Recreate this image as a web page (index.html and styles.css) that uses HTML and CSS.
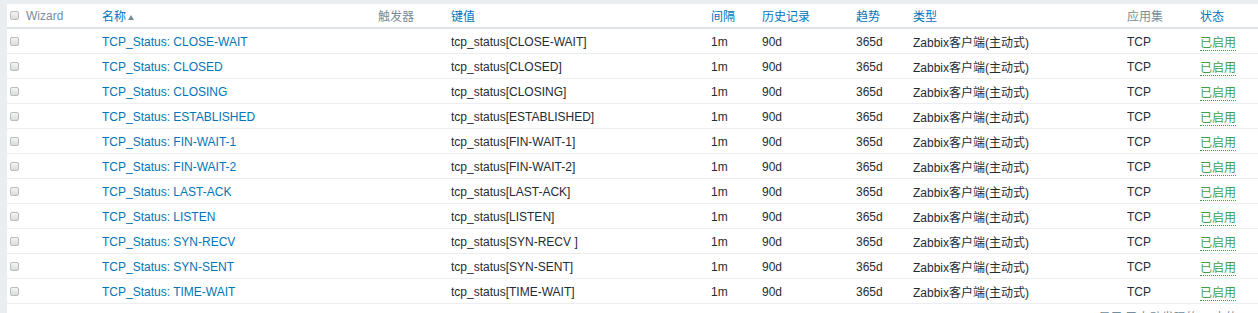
FILE: index.html
```html
<!DOCTYPE html>
<html lang="zh">
<head>
<meta charset="utf-8">
<title>监控项</title>
<link rel="stylesheet" href="styles.css">
</head>
<body>
<div class="panel">
<table class="list">
<colgroup>
<col class="c-cb"><col class="c-wiz"><col class="c-name"><col class="c-trig"><col class="c-key"><col class="c-int"><col class="c-hist"><col class="c-trend"><col class="c-type"><col class="c-app"><col class="c-status">
</colgroup>
<thead>
<tr>
<th class="cb-cell"><span class="cb"></span></th>
<th class="muted">Wizard</th>
<th><a class="link sorted">名称</a></th>
<th class="muted">触发器</th>
<th><a class="link">键值</a></th>
<th><a class="link">间隔</a></th>
<th><a class="link">历史记录</a></th>
<th><a class="link">趋势</a></th>
<th><a class="link">类型</a></th>
<th class="muted">应用集</th>
<th><a class="link">状态</a></th>
</tr>
</thead>
<tbody>
<tr><td class="cb-cell"><span class="cb"></span></td><td></td><td><a class="link">TCP_Status: CLOSE-WAIT</a></td><td></td><td>tcp_status[CLOSE-WAIT]</td><td>1m</td><td>90d</td><td>365d</td><td>Zabbix客户端(主动式)</td><td>TCP</td><td><a class="enabled">已启用</a></td></tr>
<tr><td class="cb-cell"><span class="cb"></span></td><td></td><td><a class="link">TCP_Status: CLOSED</a></td><td></td><td>tcp_status[CLOSED]</td><td>1m</td><td>90d</td><td>365d</td><td>Zabbix客户端(主动式)</td><td>TCP</td><td><a class="enabled">已启用</a></td></tr>
<tr><td class="cb-cell"><span class="cb"></span></td><td></td><td><a class="link">TCP_Status: CLOSING</a></td><td></td><td>tcp_status[CLOSING]</td><td>1m</td><td>90d</td><td>365d</td><td>Zabbix客户端(主动式)</td><td>TCP</td><td><a class="enabled">已启用</a></td></tr>
<tr><td class="cb-cell"><span class="cb"></span></td><td></td><td><a class="link">TCP_Status: ESTABLISHED</a></td><td></td><td>tcp_status[ESTABLISHED]</td><td>1m</td><td>90d</td><td>365d</td><td>Zabbix客户端(主动式)</td><td>TCP</td><td><a class="enabled">已启用</a></td></tr>
<tr><td class="cb-cell"><span class="cb"></span></td><td></td><td><a class="link">TCP_Status: FIN-WAIT-1</a></td><td></td><td>tcp_status[FIN-WAIT-1]</td><td>1m</td><td>90d</td><td>365d</td><td>Zabbix客户端(主动式)</td><td>TCP</td><td><a class="enabled">已启用</a></td></tr>
<tr><td class="cb-cell"><span class="cb"></span></td><td></td><td><a class="link">TCP_Status: FIN-WAIT-2</a></td><td></td><td>tcp_status[FIN-WAIT-2]</td><td>1m</td><td>90d</td><td>365d</td><td>Zabbix客户端(主动式)</td><td>TCP</td><td><a class="enabled">已启用</a></td></tr>
<tr><td class="cb-cell"><span class="cb"></span></td><td></td><td><a class="link">TCP_Status: LAST-ACK</a></td><td></td><td>tcp_status[LAST-ACK]</td><td>1m</td><td>90d</td><td>365d</td><td>Zabbix客户端(主动式)</td><td>TCP</td><td><a class="enabled">已启用</a></td></tr>
<tr><td class="cb-cell"><span class="cb"></span></td><td></td><td><a class="link">TCP_Status: LISTEN</a></td><td></td><td>tcp_status[LISTEN]</td><td>1m</td><td>90d</td><td>365d</td><td>Zabbix客户端(主动式)</td><td>TCP</td><td><a class="enabled">已启用</a></td></tr>
<tr><td class="cb-cell"><span class="cb"></span></td><td></td><td><a class="link">TCP_Status: SYN-RECV</a></td><td></td><td>tcp_status[SYN-RECV ]</td><td>1m</td><td>90d</td><td>365d</td><td>Zabbix客户端(主动式)</td><td>TCP</td><td><a class="enabled">已启用</a></td></tr>
<tr><td class="cb-cell"><span class="cb"></span></td><td></td><td><a class="link">TCP_Status: SYN-SENT</a></td><td></td><td>tcp_status[SYN-SENT]</td><td>1m</td><td>90d</td><td>365d</td><td>Zabbix客户端(主动式)</td><td>TCP</td><td><a class="enabled">已启用</a></td></tr>
<tr><td class="cb-cell"><span class="cb"></span></td><td></td><td><a class="link">TCP_Status: TIME-WAIT</a></td><td></td><td>tcp_status[TIME-WAIT]</td><td>1m</td><td>90d</td><td>365d</td><td>Zabbix客户端(主动式)</td><td>TCP</td><td><a class="enabled">已启用</a></td></tr>
</tbody>
</table>
<div class="paging">显示 已自动发现的 11中的11</div>
</div>
</body>
</html>
```
FILE: styles.css
```css
html, body {
  margin: 0;
  padding: 0;
}
body {
  background: #ebeef0;
  font-family: "Liberation Sans", Arial, "Noto Sans CJK SC", sans-serif;
  font-size: 12px;
  color: #1f2c33;
  padding: 4px 0 0 7px;
  overflow: hidden;
}
.panel {
  background: #ffffff;
  min-height: 320px;
}
.list {
  width: 1251px;
  border-collapse: collapse;
  table-layout: fixed;
}
.c-cb { width: 19px; }
.c-wiz { width: 76px; }
.c-name { width: 276px; }
.c-trig { width: 73px; }
.c-key { width: 260px; }
.c-int { width: 51px; }
.c-hist { width: 94px; }
.c-trend { width: 57px; }
.c-type { width: 214px; }
.c-app { width: 73px; }
.c-status { width: 58px; }

.list th {
  height: 23px;
  padding: 0;
  text-align: left;
  font-weight: normal;
  border-bottom: 2px solid #dfe3e6;
  white-space: nowrap;
}
.list th.muted {
  color: #768d99;
}
.list td {
  height: 23px;
  padding: 1px 0 0 0;
  border-bottom: 1px solid #ebeef0;
  white-space: nowrap;
  overflow: hidden;
}
.list th.cb-cell,
.list td.cb-cell {
  padding-left: 3px;
}
.cb {
  display: block;
  width: 7px;
  height: 7px;
  border: 1px solid #b8bdc0;
  border-radius: 2px;
  background: linear-gradient(#f4f4f4, #dcdcdc);
}
.link {
  color: #0275b8;
  text-decoration: none;
}
.sorted::after {
  content: "";
  display: inline-block;
  margin-left: 2px;
  border-left: 3px solid transparent;
  border-right: 3px solid transparent;
  border-bottom: 5px solid #768d99;
  vertical-align: 1px;
}
.enabled {
  color: #429e47;
  text-decoration: none;
  border-bottom: 1px dotted #429e47;
}
.paging {
  color: #768d99;
  text-align: right;
  padding: 4px 8px 0 0;
}
```
